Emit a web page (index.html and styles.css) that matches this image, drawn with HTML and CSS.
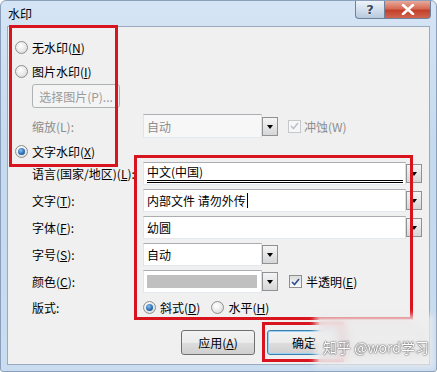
FILE: index.html
```html
<!DOCTYPE html>
<html lang="zh-CN">
<head>
    <meta charset="UTF-8">
    <title>水印</title>
    <link rel="stylesheet" href="styles.css">
</head>
<body>
    <div class="window">
        <div class="titlebar">
            <span class="title">水印</span>
            <div class="caption-buttons">
                <span class="cap-btn help">?</span>
                <span class="cap-btn close">
                    <svg width="14" height="11" viewBox="0 0 14 11"><path d="M2 1 L12 10 M12 1 L2 10" stroke="#fff" stroke-width="2.6" stroke-linecap="round"/></svg>
                </span>
            </div>
        </div>
        <div class="client">
            <div class="radio-row first"><span class="radio"></span>无水印(<u>N</u>)</div>
            <div class="radio-row gap6"><span class="radio"></span>图片水印(<u>I</u>)</div>
            <div class="indent pic-row"><span class="btn disabled wide">选择图片(P)...</span></div>
            <div class="indent form-row scale-row">
                <span class="label disabled-text">缩放(L):</span>
                <div class="combo short">
                    <div class="combo-field off">自动</div>
                    <span class="combo-drop"></span>
                </div>
                <span class="check off"><svg width="9" height="8" viewBox="0 0 9 8"><path d="M1 4 L3.5 6.5 L8 1" stroke="#b9c2cc" stroke-width="1.6" fill="none"/></svg></span>
                <span class="disabled-text">冲蚀(W)</span>
            </div>
            <div class="radio-row gap4"><span class="radio on"></span>文字水印(<u>X</u>)</div>
            <div class="indent form-row first-field">
                <span class="label">语言(国家/地区)(<u>L</u>):</span>
                <div class="combo full">
                    <div class="combo-field lang"><span class="lang-text">中文(中国)</span></div>
                    <span class="combo-drop"></span>
                </div>
            </div>
            <div class="indent form-row">
                <span class="label">文字(<u>T</u>):</span>
                <div class="combo full">
                    <div class="combo-field">内部文件 请勿外传<span class="caret"></span></div>
                    <span class="combo-drop"></span>
                </div>
            </div>
            <div class="indent form-row">
                <span class="label">字体(<u>F</u>):</span>
                <div class="combo full">
                    <div class="combo-field">幼圆</div>
                    <span class="combo-drop"></span>
                </div>
            </div>
            <div class="indent form-row">
                <span class="label">字号(<u>S</u>):</span>
                <div class="combo short">
                    <div class="combo-field">自动</div>
                    <span class="combo-drop"></span>
                </div>
            </div>
            <div class="indent form-row">
                <span class="label">颜色(<u>C</u>):</span>
                <div class="combo short">
                    <div class="combo-field"><span class="swatch"></span></div>
                    <span class="combo-drop"></span>
                </div>
                <span class="check"><svg width="9" height="8" viewBox="0 0 9 8"><path d="M1 4 L3.5 6.5 L8 1" stroke="#2d4f8e" stroke-width="1.6" fill="none"/></svg></span>
                <span>半透明(<u>E</u>)</span>
            </div>
            <div class="indent form-row layout-row">
                <span class="label">版式:</span>
                <span class="radio on"></span><span>斜式(<u>D</u>)</span>
                <span class="radio second"></span><span>水平(<u>H</u>)</span>
            </div>
            <div class="button-row">
                <span class="btn apply">应用(<u>A</u>)</span>
                <span class="btn ok">确定</span>
                <!-- cancel button, its label is hidden under the watermark -->
                <span class="btn cancel"></span>
            </div>
        </div>

        <!-- annotations on top of the screenshot -->
        <div class="mark mark-top"></div>
        <div class="mark mark-fields"></div>
        <div class="mark mark-ok"></div>
        <div class="watermark">知乎 @word学习</div>
    </div>
</body>
</html>
```

FILE: styles.css
```css
body {
    margin: 0;
    font-family: "Noto Sans CJK SC", "Liberation Sans", sans-serif;
    font-size: 12px;
    color: #000;
    background: #fff;
}

.window {
    position: relative;
    width: 437px;
    height: 372px;
    box-sizing: border-box;
    background: linear-gradient(180deg, #d6e5f5 0%, #c5d9ef 40%, #c9dcf0 100%);
    border: 1px solid #8aa0ba;
    border-radius: 6px 6px 3px 3px;
    display: flex;
    flex-direction: column;
}

.titlebar {
    height: 25px;
    display: flex;
    align-items: flex-start;
    justify-content: space-between;
}

.title {
    margin: 4px 0 0 7px;
    line-height: 17px;
}

.caption-buttons {
    display: flex;
    margin-right: 5px;
}

.cap-btn {
    height: 18px;
    box-sizing: border-box;
    border: 1px solid #6f829c;
    border-top: none;
    display: flex;
    align-items: center;
    justify-content: center;
}

.help {
    width: 29px;
    border-radius: 0 0 0 4px;
    border-right: none;
    background: linear-gradient(180deg, #eef3f9 0%, #d3dfed 50%, #b8c9de 100%);
    color: #3a4a5e;
    font-family: "DejaVu Sans", sans-serif;
    font-size: 13px;
    font-weight: bold;
    text-shadow: 0 0 2px #fff;
}

.close {
    width: 47px;
    border-radius: 0 0 4px 0;
    background: linear-gradient(180deg, #e9a99b 0%, #d56b55 45%, #c4402a 55%, #d0654d 100%);
}

.client {
    flex: 1;
    margin: 0 6px 6px 6px;
    background: #f0f0f0;
    border: 1px solid #9aaabe;
    display: flex;
    flex-direction: column;
}

.radio-row {
    height: 18px;
    display: flex;
    align-items: center;
    padding-left: 7px;
}

.radio-row.first {
    margin-top: 11px;
}

.gap6 {
    margin-top: 6px;
}

.gap4 {
    margin-top: 4px;
}

.radio {
    width: 11px;
    height: 11px;
    border-radius: 50%;
    border: 1px solid #8e8f8f;
    background: radial-gradient(circle at 40% 35%, #ffffff 0%, #e6e6e6 60%, #cfcfcf 100%);
    margin-right: 4px;
    flex: none;
    position: relative;
}

.radio.on::after {
    content: "";
    position: absolute;
    left: 2px;
    top: 2px;
    width: 7px;
    height: 7px;
    border-radius: 50%;
    background: radial-gradient(circle at 40% 35%, #8ec3f0 0%, #2b6fb5 55%, #153f74 100%);
}

.indent {
    padding-left: 24px;
}

.pic-row {
    margin-top: 4px;
    height: 24px;
    display: flex;
}

.btn {
    height: 24px;
    box-sizing: border-box;
    border: 1px solid #707070;
    border-radius: 3px;
    background: linear-gradient(180deg, #f2f2f2 0%, #ebebeb 50%, #dddddd 51%, #cfcfcf 100%);
    display: flex;
    align-items: center;
    justify-content: center;
}

.btn.disabled {
    border-color: #adb2b5;
    background: #f4f4f4;
    color: #9a9a9a;
}

.btn.wide {
    width: 88px;
}

.form-row {
    height: 23px;
    display: flex;
    align-items: center;
    margin-top: 4px;
}

.scale-row {
    height: 24px;
    margin-top: 6px;
}

.first-field {
    margin-top: 2px;
}

.label {
    width: 111px;
    flex: none;
}

.disabled-text {
    color: #8d8d8d;
}

.combo {
    display: flex;
    align-items: center;
    height: 100%;
}

.combo.full {
    width: 279px;
}

.combo.short {
    width: 135px;
}

.combo-field {
    flex: 1;
    height: 100%;
    box-sizing: border-box;
    background: #fff;
    border: 1px solid #abadb3;
    border-left-color: #e2e3ea;
    border-right-color: #dbdfe6;
    border-bottom-color: #e3e9ef;
    padding-left: 3px;
    display: flex;
    align-items: center;
}

.combo-field.off {
    background: #f7f7f7;
    color: #8d8d8d;
}

.combo-drop {
    width: 16px;
    height: 19px;
    box-sizing: border-box;
    border: 1px solid #8f9295;
    background: linear-gradient(180deg, #f5f5f5 0%, #e6e6e6 50%, #d6d6d6 100%);
    display: flex;
    align-items: center;
    justify-content: center;
}

.combo-drop::after {
    content: "";
    border-left: 3.5px solid transparent;
    border-right: 3.5px solid transparent;
    border-top: 4px solid #000;
    margin-top: 1px;
}

.lang {
    align-items: flex-end;
    padding-bottom: 1px;
}

.lang-text {
    flex: 1;
    line-height: 17px;
    border-bottom: 3px double #000;
    margin-right: 2px;
}

.caret {
    width: 1px;
    height: 15px;
    background: #000;
    margin-left: 1px;
}

.swatch {
    width: 110px;
    height: 13px;
    background: #c0c0c0;
}

.check {
    width: 13px;
    height: 13px;
    box-sizing: border-box;
    border: 1px solid #8e8f8f;
    background: linear-gradient(180deg, #dcdcdc, #fafafa);
    margin: 0 4px 0 11px;
    display: flex;
    align-items: center;
    justify-content: center;
}

.check.off {
    border-color: #c6c9cc;
    background: #f7f7f7;
    margin-left: 10px;
    margin-right: 3px;
}

.layout-row {
    height: 18px;
    margin-top: 5px;
}

.radio.second {
    margin-left: 11px;
}

.button-row {
    margin-top: 14px;
    display: flex;
    justify-content: flex-end;
    padding-right: 6px;
}

.button-row .btn {
    width: 74px;
    height: 25px;
}

.apply {
    margin-right: 12px;
}

.ok {
    margin-right: 8px;
    border-color: #3c7fb1;
    box-shadow: inset 0 0 0 1px #9bd2f1;
}

.mark {
    position: absolute;
    border: 3px solid #d8141f;
    box-sizing: border-box;
}

.mark-top {
    left: 8px;
    top: 24px;
    width: 109px;
    height: 142px;
}

.mark-fields {
    left: 133px;
    top: 154px;
    width: 279px;
    height: 165px;
}

.mark-ok {
    left: 261px;
    top: 321px;
    width: 82px;
    height: 40px;
}

.watermark {
    position: absolute;
    left: 318px;
    top: 318px;
    width: 110px;
    height: 44px;
    box-sizing: border-box;
    padding: 18px 0 0 4px;
    background: rgba(238, 238, 238, 0.8);
    backdrop-filter: blur(4px);
    box-shadow: 0 0 6px 4px rgba(238, 238, 238, 0.8);
    color: #fff;
    font-size: 14px;
    white-space: nowrap;
    text-shadow: 0 0 2px #555, 0 0 1px #333;
}
```
